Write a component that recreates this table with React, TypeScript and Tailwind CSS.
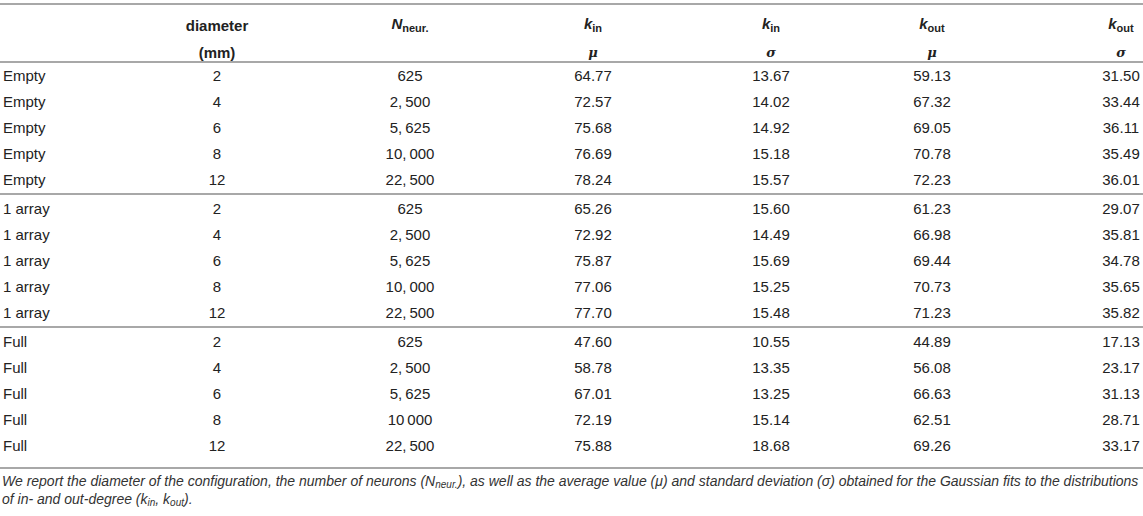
import React from "react";

type Row = [string, string, string, string, string, string, string];

const groups: Row[][] = [
  [
    ["Empty", "2", "625", "64.77", "13.67", "59.13", "31.50"],
    ["Empty", "4", "2,\u2009500", "72.57", "14.02", "67.32", "33.44"],
    ["Empty", "6", "5,\u2009625", "75.68", "14.92", "69.05", "36.11"],
    ["Empty", "8", "10,\u2009000", "76.69", "15.18", "70.78", "35.49"],
    ["Empty", "12", "22,\u2009500", "78.24", "15.57", "72.23", "36.01"],
  ],
  [
    ["1 array", "2", "625", "65.26", "15.60", "61.23", "29.07"],
    ["1 array", "4", "2,\u2009500", "72.92", "14.49", "66.98", "35.81"],
    ["1 array", "6", "5,\u2009625", "75.87", "15.69", "69.44", "34.78"],
    ["1 array", "8", "10,\u2009000", "77.06", "15.25", "70.73", "35.65"],
    ["1 array", "12", "22,\u2009500", "77.70", "15.48", "71.23", "35.82"],
  ],
  [
    ["Full", "2", "625", "47.60", "10.55", "44.89", "17.13"],
    ["Full", "4", "2,\u2009500", "58.78", "13.35", "56.08", "23.17"],
    ["Full", "6", "5,\u2009625", "67.01", "13.25", "66.63", "31.13"],
    ["Full", "8", "10\u2009000", "72.19", "15.14", "62.51", "28.71"],
    ["Full", "12", "22,\u2009500", "75.88", "18.68", "69.26", "33.17"],
  ],
];

const grid = "grid grid-cols-[150px_104px_196px_183px_178px_161px_170px]";
const cellW = ["", "w-[74px]", "w-[80px]", "w-[80px]", "w-[80px]", "w-[80px]", "w-[42px]"];

function Cell({ i, children }: { i: number; children: React.ReactNode }) {
  if (i === 0) return <div className="pl-[3px] whitespace-nowrap">{children}</div>;
  return (
    <div className={`justify-self-end text-center whitespace-nowrap ${cellW[i]}`}>{children}</div>
  );
}

function K({ sub }: { sub: string }) {
  return (
    <span className="font-bold">
      <span className="italic">k</span>
      <span className="text-[11px] align-[-3px] not-italic">{sub}</span>
    </span>
  );
}

const greek = "font-bold italic font-['DejaVu_Serif',serif] text-[13px]";

export default function App() {
  const header1: React.ReactNode[] = [
    "",
    <span className="font-bold">diameter</span>,
    <span className="font-bold">
      <span className="italic">N</span>
      <span className="text-[11px] align-[-3px]">neur.</span>
    </span>,
    <K sub="in" />,
    <K sub="in" />,
    <K sub="out" />,
    <K sub="out" />,
  ];
  const header2: React.ReactNode[] = [
    "",
    <span className="font-bold">(mm)</span>,
    "",
    <span className={greek}>μ</span>,
    <span className={greek}>σ</span>,
    <span className={greek}>μ</span>,
    <span className={greek}>σ</span>,
  ];

  return (
    <div className="w-[1143px] h-[516px] bg-white text-[#222] font-['Liberation_Sans','Arial',sans-serif] text-[15px] pt-[3px] overflow-hidden">
      <div className="border-t-2 border-[#a8a8a8]">
        <div className={`${grid} pt-[6px] h-[32px] items-center leading-[26px]`}>
          {header1.map((h, i) => (
            <Cell key={i} i={i}>
              {h}
            </Cell>
          ))}
        </div>
        <div className={`${grid} pt-[6px] h-[24px] items-center leading-[18px]`}>
          {header2.map((h, i) => (
            <Cell key={i} i={i}>
              {h}
            </Cell>
          ))}
        </div>
      </div>
      {groups.map((g, gi) => (
        <div
          key={gi}
          className={`border-t-2 border-[#a8a8a8] ${gi > 0 ? "pt-[1px]" : ""} ${gi === groups.length - 1 ? "pb-[8px] border-b-2" : ""}`}
        >
          {g.map((r, ri) => (
            <div key={ri} className={`${grid} h-[26px] items-center`}>
              {r.map((c, ci) => (
                <Cell key={ci} i={ci}>
                  {c}
                </Cell>
              ))}
            </div>
          ))}
        </div>
      ))}
      <p className="italic text-[14px] leading-[15px] text-[#333] pt-[5px] pl-[2px] whitespace-nowrap">
        We report the diameter of the configuration, the number of neurons (N
        <span className="text-[10px] align-[-2px]">neur.</span>), as well as the average value (μ) and
        standard deviation (σ) obtained for the Gaussian fits to the distributions
        <br />
        of in- and out-degree (k<span className="text-[10px] align-[-2px]">in</span>, k
        <span className="text-[10px] align-[-2px]">out</span>).
      </p>
    </div>
  );
}
